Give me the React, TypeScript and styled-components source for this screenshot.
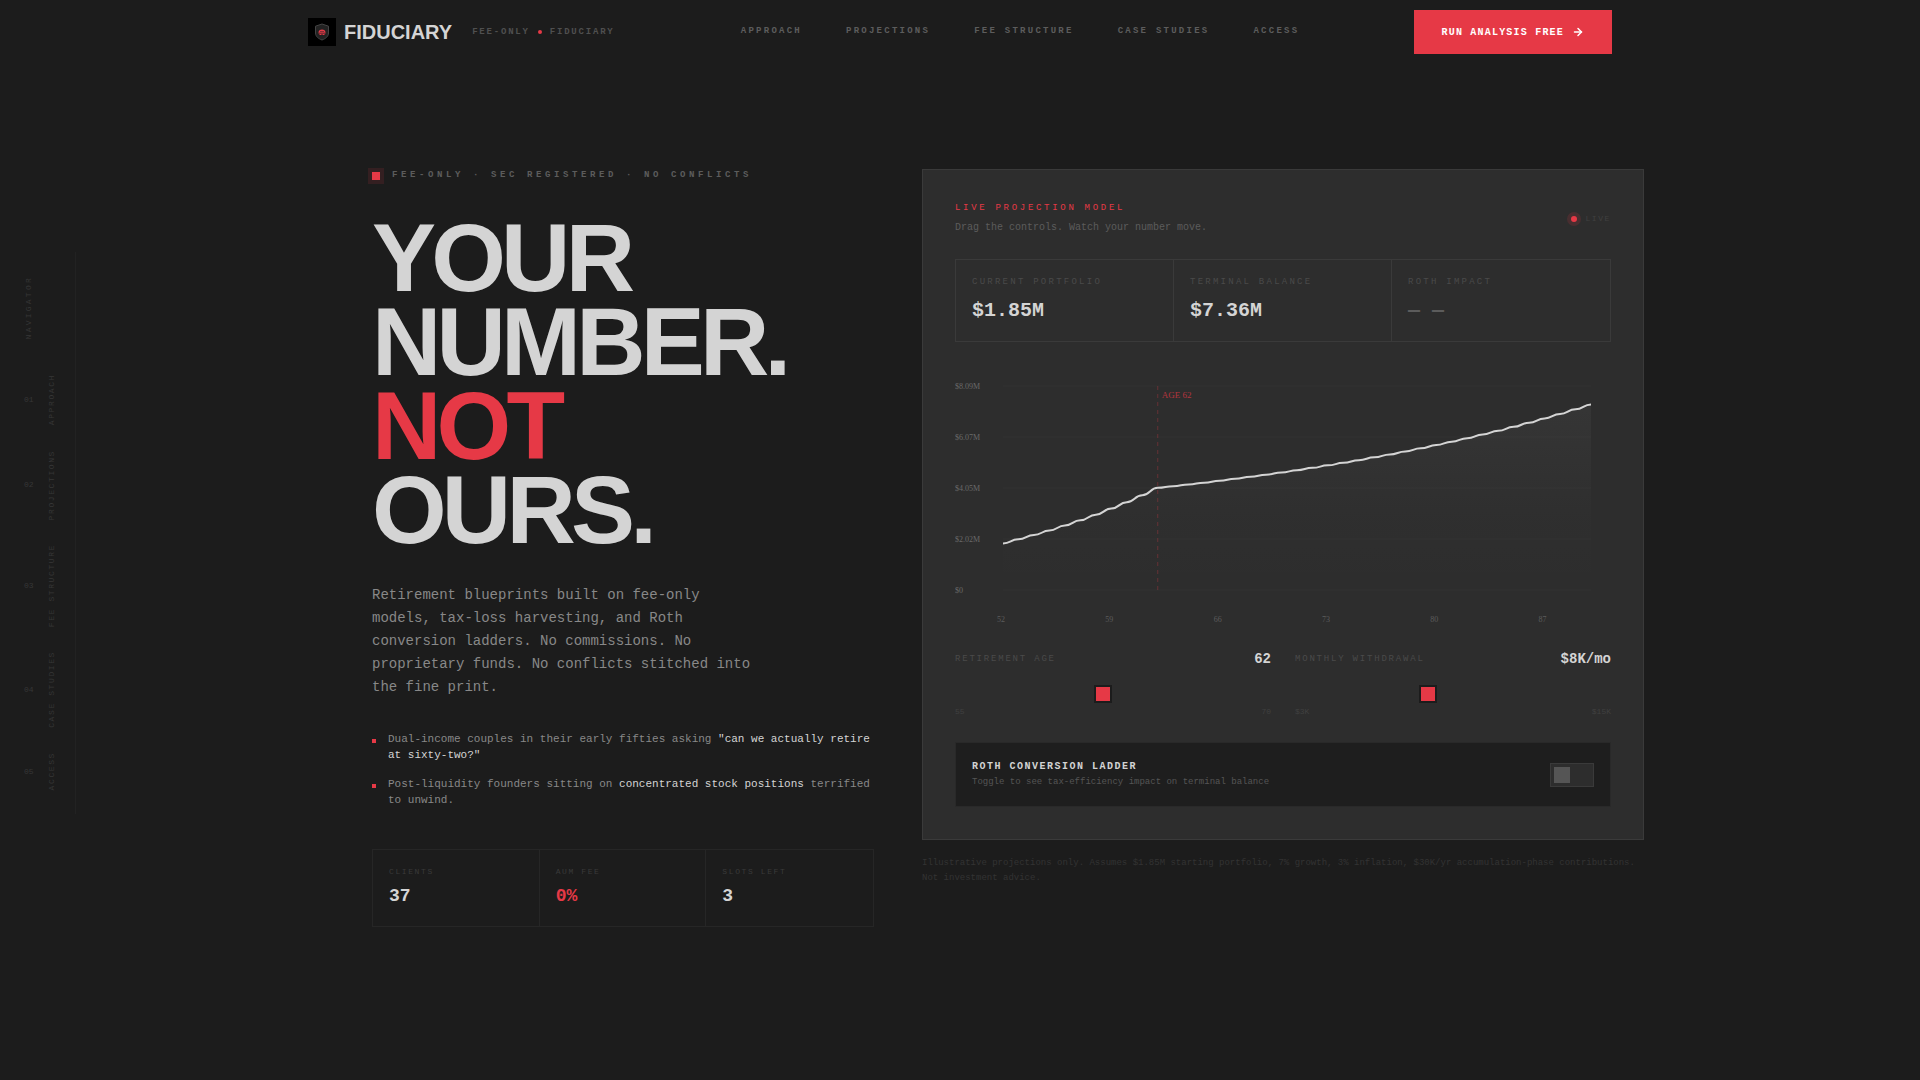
import { useState } from "react";
import styled, { createGlobalStyle } from "styled-components";
import { ArrowRight } from "lucide-react";

const c = {
  ink: "#1c1c1c",
  panel: "#2d2d2d",
  line: "#3a3a3a",
  text: "#d4d4d4",
  muted: "#888888",
  dim: "#5c5c5c",
  faint: "#4a4a4a",
  ghost: "#333333",
  red: "#e63946",
};
const mono = `"Liberation Mono", "Courier New", monospace`;
const sans = `"Liberation Sans", Arial, sans-serif`;
const serif = `"Liberation Serif", "Times New Roman", serif`;

const Global = createGlobalStyle`
  * { box-sizing: border-box; }
  body { margin: 0; background: ${c.ink}; color: ${c.text}; font-family: ${mono}; }
  h1, h2, p, ul, ol, dl, dd { margin: 0; padding: 0; }
  ul, ol { list-style: none; }
  a { color: inherit; text-decoration: none; }
`;

const Page = styled.div`
  min-height: 100vh;
`;

const Header = styled.header`
  border-bottom: 1px solid transparent;
`;

const HeaderInner = styled.div`
  display: flex;
  align-items: center;
  justify-content: space-between;
  max-width: 1400px;
  height: 64px;
  margin: 0 auto;
  padding: 0 48px;
`;

const Brand = styled.div`
  display: flex;
  align-items: center;
  gap: 20px;
  padding-right: 12px;
`;

const BrandLink = styled.a`
  display: flex;
  align-items: center;
  gap: 8px;
  font-family: ${sans};
  font-size: 20px;
  font-weight: 700;
`;

const LogoTile = styled.span`
  display: grid;
  place-items: center;
  width: 28px;
  height: 28px;
  background: #000;
`;

const BrandTag = styled.span`
  display: flex;
  align-items: center;
  gap: 8px;
  font-size: 9px;
  font-weight: 700;
  letter-spacing: 0.2em;
  color: #4f4f4f;
`;

const TagDot = styled.span`
  width: 4px;
  height: 4px;
  border-radius: 50%;
  background: ${c.red};
`;

const NavLinks = styled.nav`
  display: flex;
  gap: 44px;
  padding-bottom: 2px;
  font-size: 9px;
  font-weight: 700;
  letter-spacing: 0.25em;
  color: ${c.dim};
`;

const CtaButton = styled.button`
  display: flex;
  align-items: center;
  gap: 8px;
  height: 44px;
  padding: 0 28px;
  border: 0;
  background: ${c.red};
  color: #fff;
  font-family: ${mono};
  font-size: 10px;
  font-weight: 700;
  letter-spacing: 0.12em;
  cursor: pointer;
`;

const Body = styled.div`
  display: grid;
  grid-template-columns: 96px minmax(0, 1fr);
  align-items: start;
`;

const Rail = styled.aside`
  display: flex;
  flex-direction: column;
  gap: 35px;
  width: 76px;
  margin-top: 187px;
  padding: 24px 0 24px 24px;
  border-right: 1px solid #222222;
  font-size: 8px;
  color: #363636;
`;

const RailTitle = styled.span`
  width: 10px;
  line-height: 10px;
  writing-mode: vertical-rl;
  transform: rotate(180deg);
  letter-spacing: 0.28em;
`;

const RailList = styled.ol`
  display: flex;
  flex-direction: column;
  gap: 24px;
`;

const RailLink = styled.a`
  display: flex;
  align-items: center;
  gap: 12px;
`;

const RailLabel = styled.span`
  line-height: 12px;
  writing-mode: vertical-rl;
  transform: rotate(180deg);
  letter-spacing: 0.2em;
`;

const Hero = styled.main`
  display: grid;
  grid-template-columns: repeat(12, minmax(0, 1fr));
  column-gap: 48px;
  width: 100%;
  max-width: 1400px;
  margin: 0 auto;
  padding: 104px 64px;
`;

const Intro = styled.section`
  grid-column: span 5;
`;

const Projection = styled.section`
  grid-column: span 7;
`;

const Eyebrow = styled.p`
  display: flex;
  align-items: center;
  gap: 12px;
  font-size: 9px;
  font-weight: 700;
  line-height: 13px;
  letter-spacing: 0.4em;
  color: ${c.dim};
  white-space: nowrap;
`;

const EyebrowMark = styled.span`
  width: 8px;
  height: 8px;
  background: ${c.red};
  box-shadow: 0 0 0 4px rgba(230, 57, 70, 0.12);
`;

const Headline = styled.h1`
  margin-top: 34px;
  font-family: ${sans};
  font-size: 96px;
  font-weight: 700;
  line-height: 84px;
  letter-spacing: -0.05em;
`;

const HeadLine = styled.span<{ $accent?: boolean }>`
  display: block;
  color: ${(p) => (p.$accent ? c.red : "inherit")};
`;

const Lead = styled.p`
  max-width: 384px;
  margin-top: 32px;
  font-size: 14px;
  line-height: 23px;
  color: ${c.muted};
`;

const Audience = styled.ul`
  display: flex;
  flex-direction: column;
  gap: 13px;
  margin-top: 32px;
  font-size: 11px;
  line-height: 16px;
  color: ${c.muted};
`;

const AudienceItem = styled.li`
  display: flex;
  gap: 12px;
`;

const Bullet = styled.span`
  flex: none;
  width: 4px;
  height: 4px;
  margin-top: 8px;
  background: ${c.red};
`;

const Bright = styled.span`
  color: ${c.text};
`;

const StatGrid = styled.dl<{ $line: string }>`
  display: grid;
  grid-template-columns: repeat(3, minmax(0, 1fr));
  border: 1px solid ${(p) => p.$line};

  > div:not(:last-child) {
    border-right: 1px solid ${(p) => p.$line};
  }
`;

const IntroStats = styled(StatGrid)`
  margin-top: 41px;
`;

const ModelStats = styled(StatGrid)`
  margin-top: 24px;
`;

const Stat = styled.div`
  padding: 16px;
`;

const StatLabel = styled.dt<{ $wide?: boolean }>`
  font-size: ${(p) => (p.$wide ? "9px" : "8px")};
  line-height: 12px;
  letter-spacing: ${(p) => (p.$wide ? "0.25em" : "0.2em")};
  color: ${(p) => (p.$wide ? c.faint : c.line)};
  white-space: nowrap;
`;

const StatValue = styled.dd<{ $large?: boolean; $color?: string }>`
  margin-top: ${(p) => (p.$large ? "8px" : "4px")};
  font-size: ${(p) => (p.$large ? "20px" : "18px")};
  font-weight: 700;
  line-height: ${(p) => (p.$large ? "29px" : "28px")};
  color: ${(p) => p.$color ?? c.text};
`;

const Card = styled.div`
  padding: 32px;
  border: 1px solid ${c.line};
  background: ${c.panel};
`;

const CardHead = styled.div`
  display: flex;
  align-items: center;
  justify-content: space-between;
`;

const CardTitle = styled.h2`
  font-size: 9px;
  font-weight: 400;
  line-height: 12px;
  letter-spacing: 0.3em;
  color: ${c.red};
`;

const CardHint = styled.p`
  margin-top: 6px;
  font-size: 10px;
  line-height: 15px;
  color: ${c.dim};
`;

const Live = styled.span`
  display: flex;
  align-items: center;
  gap: 8px;
  font-size: 8px;
  letter-spacing: 0.2em;
  color: #404040;
`;

const LiveDot = styled.span`
  width: 6px;
  height: 6px;
  border-radius: 50%;
  background: ${c.red};
  box-shadow: 0 0 0 4px rgba(230, 57, 70, 0.15);
`;

const ChartSvg = styled.svg`
  display: block;
  width: 100%;
  height: auto;
  margin-top: 24px;
  font-family: ${serif};
  font-size: 8px;
`;

const Controls = styled.div`
  display: grid;
  grid-template-columns: repeat(2, minmax(0, 1fr));
  gap: 24px;
  margin-top: 24px;
`;

const ControlHead = styled.div`
  display: flex;
  align-items: center;
  justify-content: space-between;
  line-height: 18px;
`;

const ControlLabel = styled.label`
  font-size: 9px;
  letter-spacing: 0.2em;
  color: ${c.faint};
`;

const ControlValue = styled.output`
  font-size: 14px;
  font-weight: 700;
`;

const Slider = styled.input`
  display: block;
  width: 100%;
  height: 20px;
  margin: 16px 0 2px;
  appearance: none;
  background: transparent;
  cursor: pointer;

  &::-webkit-slider-runnable-track {
    height: 2px;
    background: ${c.panel};
  }

  &::-webkit-slider-thumb {
    appearance: none;
    width: 18px;
    height: 18px;
    margin-top: -8px;
    border: 2px solid ${c.ink};
    background: ${c.red};
  }
`;

const ControlScale = styled.div`
  display: flex;
  justify-content: space-between;
  font-size: 8px;
  line-height: 12px;
  color: #404040;
`;

const RothPanel = styled.div`
  display: flex;
  align-items: center;
  justify-content: space-between;
  margin-top: 24px;
  padding: 16px;
  border: 1px solid #292929;
  background: #1e1e1e;
`;

const RothTitle = styled.label`
  display: block;
  font-size: 10px;
  font-weight: 700;
  line-height: 15px;
  letter-spacing: 0.15em;
`;

const RothHint = styled.p`
  font-size: 9px;
  line-height: 16px;
  color: #555555;
`;

const Switch = styled.input`
  display: flex;
  align-items: center;
  width: 44px;
  height: 24px;
  margin: 0;
  padding: 3px;
  border: 1px solid ${c.line};
  background: ${c.panel};
  appearance: none;
  cursor: pointer;

  &::before {
    content: "";
    width: 16px;
    height: 16px;
    background: #555555;
  }

  &:checked {
    justify-content: flex-end;
  }

  &:checked::before {
    background: ${c.red};
  }
`;

const Disclaimer = styled.p`
  margin-top: 16px;
  font-size: 9px;
  line-height: 15px;
  color: ${c.ghost};
`;

const sections = [
  { label: "APPROACH", href: "#approach" },
  { label: "PROJECTIONS", href: "#projections" },
  { label: "FEE STRUCTURE", href: "#fees" },
  { label: "CASE STUDIES", href: "#cases" },
  { label: "ACCESS", href: "#access" },
];

const START_AGE = 52;
const END_AGE = 90;
const START_BALANCE = 1.85;

/** Year-end balances in $M: 7% growth while saving, 4% real once drawing down. */
function project(retireAge: number, monthlyK: number, roth: boolean): number[] {
  const balances = [START_BALANCE];
  for (let age = START_AGE; age < END_AGE; age++) {
    const prev = balances[balances.length - 1];
    const next =
      age < retireAge
        ? prev * 1.07 + 0.03
        : prev * (roth ? 1.044 : 1.04) - (monthlyK * 12) / 1000;
    balances.push(Math.max(0, next));
  }
  return balances;
}

const millions = (v: number) => `$${v.toFixed(2)}M`;

function ShieldLogo() {
  return (
    <svg width="16" height="18" viewBox="0 0 16 18" fill="none" aria-hidden="true">
      <path
        d="M8 1 14.500 3.200V10c0 3.400-2.800 5.600-6.500 7C4.300 15.600 1.500 13.400 1.500 10V3.200Z"
        fill="#222"
        stroke="#444"
        strokeWidth="1"
      />
      <path d="M4.500 9.500C4.500 7.500 6 6.500 8 6.500s3.500 1 3.500 3Z" fill={c.red} />
      <path d="M4.500 10h7M5.500 11.500h2M8.500 11.500h2" stroke={c.red} strokeWidth="1" />
      <path d="M6.500 8.500h1M8.500 8.500h1" stroke="#222" strokeWidth="1" />
    </svg>
  );
}

function Chart({ balances, retireAge }: { balances: number[]; retireAge: number }) {
  const left = 48;
  const right = 636;
  const top = 20;
  const bottom = 224;
  const max = Math.max(...balances) * 1.1;
  const x = (age: number) => left + ((age - START_AGE) / (END_AGE - START_AGE)) * (right - left);
  const y = (v: number) => bottom - (v / max) * (bottom - top);

  const curve = balances
    .map((v, i) => {
      const px = x(START_AGE + i);
      if (i === 0) return `M${px} ${y(v)}`;
      const mid = (x(START_AGE + i - 1) + px) / 2;
      return `C${mid} ${y(balances[i - 1])} ${mid} ${y(v)} ${px} ${y(v)}`;
    })
    .join(" ");

  return (
    <ChartSvg viewBox="0 0 656 260" role="img" aria-label="Projected balance by age">
      <defs>
        <linearGradient id="area" x1="0" y1="0" x2="0" y2="1">
          <stop offset="0" stopColor={c.text} stopOpacity="0.05" />
          <stop offset="0.6" stopColor={c.text} stopOpacity="0.01" />
          <stop offset="1" stopColor={c.text} stopOpacity="0" />
        </linearGradient>
      </defs>
      {[1, 0.75, 0.5, 0.25, 0].map((f) => (
        <g key={f}>
          <line x1={left} x2={right} y1={y(max * f)} y2={y(max * f)} stroke="#323232" />
          <text x="0" y={y(max * f) + 3} fill="#6a6a6a">
            {f === 0 ? "$0" : millions(max * f)}
          </text>
        </g>
      ))}
      <path d={`${curve} L${right} ${bottom} L${left} ${bottom} Z`} fill="url(#area)" />
      <line
        x1={x(retireAge)}
        x2={x(retireAge)}
        y1={top}
        y2={bottom}
        stroke={c.red}
        strokeDasharray="4 4"
        opacity="0.3"
      />
      <text x={x(retireAge) + 4} y={top + 12} fill={c.red} fontSize="9" opacity="0.7">
        AGE {retireAge}
      </text>
      <path d={curve} fill="none" stroke={c.text} strokeWidth="2" />
      {[52, 59, 66, 73, 80, 87].map((age) => (
        <text key={age} x={x(age) - 6} y="256" fill={c.dim}>
          {age}
        </text>
      ))}
    </ChartSvg>
  );
}

export default function App() {
  const [age, setAge] = useState(62);
  const [draw, setDraw] = useState(8);
  const [roth, setRoth] = useState(false);

  const balances = project(age, draw, roth);
  const terminal = balances[balances.length - 1];
  const baseline = project(age, draw, false);
  const impact = terminal - baseline[baseline.length - 1];

  return (
    <Page>
      <Global />
      <Header>
        <HeaderInner>
          <Brand>
            <BrandLink href="#top">
              <LogoTile>
                <ShieldLogo />
              </LogoTile>
              FIDUCIARY
            </BrandLink>
            <BrandTag>
              <span>FEE-ONLY</span>
              <TagDot />
              <span>FIDUCIARY</span>
            </BrandTag>
          </Brand>
          <NavLinks aria-label="Main">
            {sections.map((s) => (
              <a key={s.label} href={s.href}>
                {s.label}
              </a>
            ))}
          </NavLinks>
          <CtaButton type="button">
            <span>RUN ANALYSIS FREE</span>
            <ArrowRight size={12} strokeWidth={3} />
          </CtaButton>
        </HeaderInner>
      </Header>

      <Body>
        <Rail>
          <RailTitle>NAVIGATOR</RailTitle>
          <RailList>
            {sections.map((s, i) => (
              <li key={s.label}>
                <RailLink href={s.href}>
                  <span>0{i + 1}</span>
                  <RailLabel>{s.label}</RailLabel>
                </RailLink>
              </li>
            ))}
          </RailList>
        </Rail>

        <Hero>
          <Intro>
            <Eyebrow>
              <EyebrowMark />
              <span>FEE-ONLY · SEC REGISTERED · NO CONFLICTS</span>
            </Eyebrow>
            <Headline>
              <HeadLine>YOUR</HeadLine>
              <HeadLine>NUMBER.</HeadLine>
              <HeadLine $accent>NOT</HeadLine>
              <HeadLine>OURS.</HeadLine>
            </Headline>
            <Lead>
              Retirement blueprints built on fee-only models, tax-loss harvesting, and Roth
              conversion ladders. No commissions. No proprietary funds. No conflicts stitched into
              the fine print.
            </Lead>
            <Audience>
              <AudienceItem>
                <Bullet />
                <span>
                  Dual-income couples in their early fifties asking{" "}
                  <Bright>"can we actually retire at sixty-two?"</Bright>
                </span>
              </AudienceItem>
              <AudienceItem>
                <Bullet />
                <span>
                  Post-liquidity founders sitting on <Bright>concentrated stock positions</Bright>{" "}
                  terrified to unwind.
                </span>
              </AudienceItem>
            </Audience>
            <IntroStats $line="#262626">
              <Stat>
                <StatLabel>CLIENTS</StatLabel>
                <StatValue>37</StatValue>
              </Stat>
              <Stat>
                <StatLabel>AUM FEE</StatLabel>
                <StatValue $color={c.red}>0%</StatValue>
              </Stat>
              <Stat>
                <StatLabel>SLOTS LEFT</StatLabel>
                <StatValue>3</StatValue>
              </Stat>
            </IntroStats>
          </Intro>

          <Projection>
            <Card>
              <CardHead>
                <div>
                  <CardTitle>LIVE PROJECTION MODEL</CardTitle>
                  <CardHint>Drag the controls. Watch your number move.</CardHint>
                </div>
                <Live>
                  <LiveDot />
                  <span>LIVE</span>
                </Live>
              </CardHead>

              <ModelStats $line={c.line}>
                <Stat>
                  <StatLabel $wide>CURRENT PORTFOLIO</StatLabel>
                  <StatValue $large>{millions(START_BALANCE)}</StatValue>
                </Stat>
                <Stat>
                  <StatLabel $wide>TERMINAL BALANCE</StatLabel>
                  <StatValue $large>{millions(terminal)}</StatValue>
                </Stat>
                <Stat>
                  <StatLabel $wide>ROTH IMPACT</StatLabel>
                  <StatValue $large $color={roth ? c.red : c.dim}>
                    {roth ? `+${millions(impact)}` : "— —"}
                  </StatValue>
                </Stat>
              </ModelStats>

              <Chart balances={balances} retireAge={age} />

              <Controls>
                <div>
                  <ControlHead>
                    <ControlLabel htmlFor="age">RETIREMENT AGE</ControlLabel>
                    <ControlValue htmlFor="age">{age}</ControlValue>
                  </ControlHead>
                  <Slider
                    id="age"
                    type="range"
                    min={55}
                    max={70}
                    value={age}
                    onChange={(e) => setAge(Number(e.target.value))}
                  />
                  <ControlScale>
                    <span>55</span>
                    <span>70</span>
                  </ControlScale>
                </div>
                <div>
                  <ControlHead>
                    <ControlLabel htmlFor="draw">MONTHLY WITHDRAWAL</ControlLabel>
                    <ControlValue htmlFor="draw">${draw}K/mo</ControlValue>
                  </ControlHead>
                  <Slider
                    id="draw"
                    type="range"
                    min={3}
                    max={15}
                    value={draw}
                    onChange={(e) => setDraw(Number(e.target.value))}
                  />
                  <ControlScale>
                    <span>$3K</span>
                    <span>$15K</span>
                  </ControlScale>
                </div>
              </Controls>

              <RothPanel>
                <div>
                  <RothTitle htmlFor="roth">ROTH CONVERSION LADDER</RothTitle>
                  <RothHint>Toggle to see tax-efficiency impact on terminal balance</RothHint>
                </div>
                <Switch
                  id="roth"
                  type="checkbox"
                  role="switch"
                  checked={roth}
                  onChange={(e) => setRoth(e.target.checked)}
                />
              </RothPanel>
            </Card>
            <Disclaimer>
              Illustrative projections only. Assumes $1.85M starting portfolio, 7% growth, 3%
              inflation, $30K/yr accumulation-phase contributions. Not investment advice.
            </Disclaimer>
          </Projection>
        </Hero>
      </Body>
    </Page>
  );
}
